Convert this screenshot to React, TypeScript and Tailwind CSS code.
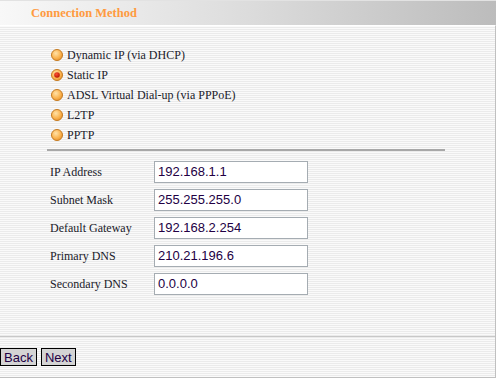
import type { ReactNode } from 'react'

const options = [
  { label: 'Dynamic IP (via DHCP)', checked: false },
  { label: 'Static IP', checked: true },
  { label: 'ADSL Virtual Dial-up (via PPPoE)', checked: false },
  { label: 'L2TP', checked: false },
  { label: 'PPTP', checked: false },
]

const fields = [
  { label: 'IP Address', value: '192.168.1.1' },
  { label: 'Subnet Mask', value: '255.255.255.0' },
  { label: 'Default Gateway', value: '192.168.2.254' },
  { label: 'Primary DNS', value: '210.21.196.6' },
  { label: 'Secondary DNS', value: '0.0.0.0' },
]

const Radio = ({ checked }: { checked: boolean }) => (
  <svg width="12" height="12" viewBox="0 0 12 12" className="shrink-0">
    <defs>
      <radialGradient id="rg" cx="40%" cy="35%" r="70%">
        <stop offset="0%" stopColor="#ffe2a8" />
        <stop offset="60%" stopColor="#fbb552" />
        <stop offset="100%" stopColor="#e8922c" />
      </radialGradient>
      <radialGradient id="dot" cx="40%" cy="35%" r="70%">
        <stop offset="0%" stopColor="#ff5030" />
        <stop offset="100%" stopColor="#b01000" />
      </radialGradient>
    </defs>
    <circle cx="6" cy="6" r="5.5" fill="url(#rg)" stroke="#c47a22" strokeWidth="1" />
    {checked && <circle cx="6" cy="6" r="2.8" fill="url(#dot)" />}
  </svg>
)

const Btn = ({ children }: { children: ReactNode }) => (
  <button className="h-[18px] px-[3px] bg-[#d4d4d4] border border-black text-[13px] leading-none text-[#220044] [font-family:'Liberation_Sans',Arial,sans-serif]">
    {children}
  </button>
)

export default function App() {
  return (
    <div className="w-[496px] h-[378px] flex flex-col [font-family:'Liberation_Serif','Times_New_Roman',serif] text-[12px] text-[#1a1a2a] overflow-hidden">
      <div className="h-[25px] shrink-0 flex items-center pl-[31px] bg-gradient-to-r from-[#f8f8f8] via-[#dcdcdc] to-[#bcbcbc] border-t border-[#e2e2e2]">
        <h1 className="font-bold text-[12.5px] text-[#ff9a40]">Connection Method</h1>
      </div>
      <div className="flex-1 flex flex-col border-r border-b border-[#c0c0c0] border-t border-t-white bg-[repeating-linear-gradient(to_bottom,#fafafa_0px,#fafafa_1px,#ebebeb_1px,#ebebeb_2px)]">
        <div className="flex flex-col pl-[51px] pt-[21px] gap-[5px]">
          {options.map(o => (
            <label key={o.label} className="flex items-center gap-[4px] h-[15px]">
              <Radio checked={o.checked} />
              <span>{o.label}</span>
            </label>
          ))}
        </div>
        <div className="ml-[47px] mr-[50px] mt-[7px] h-[2px] bg-[#a8a8a8]" />
        <div className="flex flex-col pl-[50px] pt-[10px] gap-[6px]">
          {fields.map(f => (
            <div key={f.label} className="flex items-center h-[22px]">
              <span className="w-[104px]">{f.label}</span>
              <div className="w-[154px] h-[22px] border border-[#a5acb2] bg-white flex items-center pl-[3px] [font-family:'Liberation_Sans',Arial,sans-serif] text-[13px] text-[#220044]">
                {f.value}
              </div>
            </div>
          ))}
        </div>
        <div className="mt-auto mb-[11px] h-px bg-[#c8c8c8]" />
        <div className="flex gap-[4px] mb-[11px]">
          <Btn>Back</Btn>
          <Btn>Next</Btn>
        </div>
      </div>
    </div>
  )
}
